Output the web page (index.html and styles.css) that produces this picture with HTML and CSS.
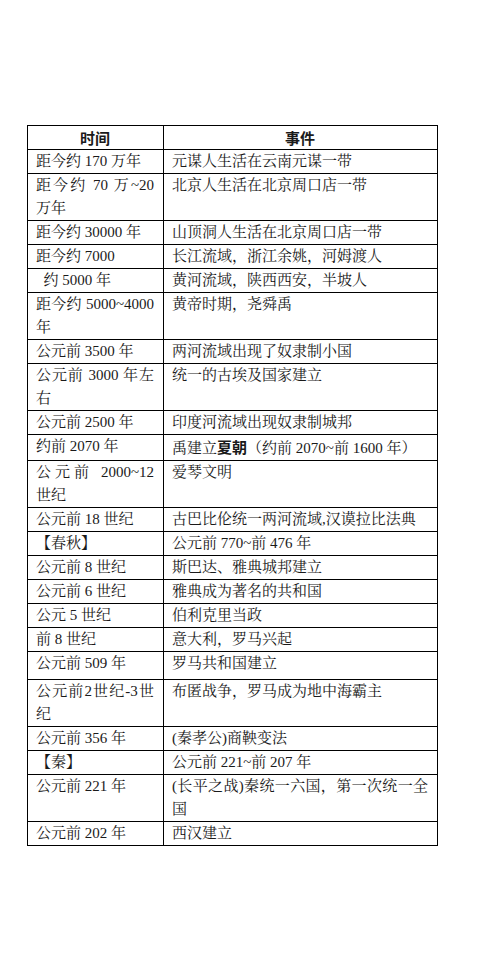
FILE: index.html
```html
<!DOCTYPE html>
<html lang="zh-CN">
<head>
<meta charset="utf-8">
<title>历史年表</title>
<link rel="stylesheet" href="styles.css">
</head>
<body>
<div class="page">
<table class="chron">
<colgroup><col class="c-time"><col class="c-event"></colgroup>
<thead>
<tr><th>时间</th><th>事件</th></tr>
</thead>
<tbody>
<tr><td>距今约 170 万年</td><td>元谋人生活在云南元谋一带</td></tr>
<tr><td>距今约 70 万~20 万年</td><td>北京人生活在北京周口店一带</td></tr>
<tr><td>距今约 30000 年</td><td>山顶洞人生活在北京周口店一带</td></tr>
<tr><td>距今约 7000</td><td>长江流域，浙江余姚，河姆渡人</td></tr>
<tr><td>&nbsp;&nbsp;约 5000 年</td><td>黄河流域，陕西西安，半坡人</td></tr>
<tr><td>距今约 5000~4000 年</td><td>黄帝时期，尧舜禹</td></tr>
<tr><td>公元前 3500 年</td><td>两河流域出现了奴隶制小国</td></tr>
<tr><td>公元前 3000 年左右</td><td>统一的古埃及国家建立</td></tr>
<tr><td>公元前 2500 年</td><td>印度河流域出现奴隶制城邦</td></tr>
<tr><td>约前 2070 年</td><td>禹建立<b>夏朝</b>（约前 2070~前 1600 年）</td></tr>
<tr><td>公元前 2000~12 世纪</td><td>爱琴文明</td></tr>
<tr><td>公元前 18 世纪</td><td>古巴比伦统一两河流域,汉谟拉比法典</td></tr>
<tr><td>【春秋】</td><td>公元前 770~前 476 年</td></tr>
<tr><td>公元前 8 世纪</td><td>斯巴达、雅典城邦建立</td></tr>
<tr><td>公元前 6 世纪</td><td>雅典成为著名的共和国</td></tr>
<tr><td>公元 5 世纪</td><td>伯利克里当政</td></tr>
<tr><td>前 8 世纪</td><td>意大利，罗马兴起</td></tr>
<tr class="tall"><td>公元前 509 年</td><td>罗马共和国建立</td></tr>
<tr><td>公元前2世纪-3世纪</td><td>布匿战争，罗马成为地中海霸主</td></tr>
<tr><td>公元前 356 年</td><td>(秦孝公)商鞅变法</td></tr>
<tr><td>【秦】</td><td>公元前 221~前 207 年</td></tr>
<tr><td>公元前 221 年</td><td>(长平之战)秦统一六国，第一次统一全国</td></tr>
<tr><td>公元前 202 年</td><td>西汉建立</td></tr>
</tbody>
</table>
</div>
</body>
</html>
```
FILE: styles.css
```css
html, body {
  margin: 0;
  padding: 0;
  background: #fff;
}
.page {
  padding: 125px 0 0 27px;
}
.chron {
  border-collapse: collapse;
  table-layout: fixed;
  width: 410px;
  font-family: "Liberation Serif", "Noto Serif CJK SC", "Noto Sans CJK SC", serif;
  font-size: 15px;
  line-height: 23px;
  color: #1a1a1a;
}
.c-time { width: 136px; }
.c-event { width: 274px; }
.chron th,
.chron td {
  border: 1px solid #000;
  padding: 0 9px 0 8px;
  vertical-align: top;
  text-align: justify;
}
.chron th {
  text-align: center;
  font-family: "Noto Sans CJK SC", sans-serif;
  font-weight: 700;
  font-size: 15px;
}
.chron b {
  font-family: "Noto Sans CJK SC", sans-serif;
  font-weight: 700;
}
.chron tr.tall td {
  padding-bottom: 4px;
}
```
